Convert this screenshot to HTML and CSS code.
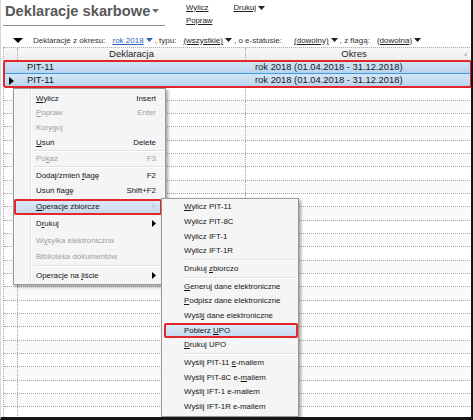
FILE: index.html
```html
<!DOCTYPE html>
<html lang="pl">
<head>
<meta charset="utf-8">
<title>Deklaracje skarbowe</title>
<link rel="stylesheet" href="styles.css">
</head>
<body>
<div class="frame">
  <div class="top">
    <div class="title">Deklaracje skarbowe<svg class="caret" width="7" height="4" viewBox="0 0 7 4"><path d="M0 0H7L3.5 4Z"/></svg></div>
    <div class="actions">
      <div class="acol"><a class="act">Wylicz</a><a class="act">Popraw</a></div>
      <a class="act drk">Drukuj<svg class="tri" width="7" height="4" viewBox="0 0 7 4"><path d="M0 0H7L3.5 4Z"/></svg></a>
    </div>
  </div>

  <div class="filter">
    <svg class="bigtri" width="10" height="5" viewBox="0 0 10 5"><path d="M0 0H10L5 5Z"/></svg>
    <span class="lbl first">Deklaracje z okresu:</span>
    <a class="dd blue">rok 2018<svg class="tri" width="7" height="4" viewBox="0 0 7 4"><path d="M0 0H7L3.5 4Z"/></svg></a>
    <span class="lbl">, typu:</span>
    <a class="dd">(wszystkie)<svg class="tri" width="7" height="4" viewBox="0 0 7 4"><path d="M0 0H7L3.5 4Z"/></svg></a>
    <span class="lbl">, o e-statusie:</span>
    <a class="dd wide">(dowolny)<svg class="tri" width="7" height="4" viewBox="0 0 7 4"><path d="M0 0H7L3.5 4Z"/></svg></a>
    <span class="lbl">, z flagą:</span>
    <a class="dd">(dowolna)<svg class="tri" width="7" height="4" viewBox="0 0 7 4"><path d="M0 0H7L3.5 4Z"/></svg></a>
  </div>

  <div class="grid">
    <div class="row ghead">
      <div class="c ind"></div>
      <div class="c hc">Deklaracja</div>
      <div class="c hc okres">Okres</div>
    </div>
    <div class="sel">
      <div class="row srow r1">
        <div class="c ind"></div>
        <div class="c txt">PIT-11</div>
        <div class="c txt">rok 2018 (01.04.2018 - 31.12.2018)</div>
      </div>
      <div class="row srow r2">
        <div class="c ind"><svg class="rtri" width="5" height="8" viewBox="0 0 5 8"><path d="M0 0L5 4L0 8Z"/></svg></div>
        <div class="c txt">PIT-11</div>
        <div class="c txt">rok 2018 (01.04.2018 - 31.12.2018)</div>
      </div>
    </div>
    <div class="body">
      <div class="row e"><div class="c ind"></div><div class="c"></div><div class="c"></div></div>
      <div class="row e alt"><div class="c ind"></div><div class="c"></div><div class="c"></div></div>
      <div class="row e"><div class="c ind"></div><div class="c"></div><div class="c"></div></div>
      <div class="row e alt"><div class="c ind"></div><div class="c"></div><div class="c"></div></div>
      <div class="row e"><div class="c ind"></div><div class="c"></div><div class="c"></div></div>
      <div class="row e alt"><div class="c ind"></div><div class="c"></div><div class="c"></div></div>
      <div class="row e"><div class="c ind"></div><div class="c"></div><div class="c"></div></div>
      <div class="row e alt"><div class="c ind"></div><div class="c"></div><div class="c"></div></div>
      <div class="row e"><div class="c ind"></div><div class="c"></div><div class="c"></div></div>
      <div class="row e alt"><div class="c ind"></div><div class="c"></div><div class="c"></div></div>
      <div class="row e"><div class="c ind"></div><div class="c"></div><div class="c"></div></div>
      <div class="row e alt"><div class="c ind"></div><div class="c"></div><div class="c"></div></div>
      <div class="row e"><div class="c ind"></div><div class="c"></div><div class="c"></div></div>
      <div class="row e alt"><div class="c ind"></div><div class="c"></div><div class="c"></div></div>
      <div class="row e"><div class="c ind"></div><div class="c"></div><div class="c"></div></div>
      <div class="row e alt"><div class="c ind"></div><div class="c"></div><div class="c"></div></div>
      <div class="row e"><div class="c ind"></div><div class="c"></div><div class="c"></div></div>
      <div class="row e alt"><div class="c ind"></div><div class="c"></div><div class="c"></div></div>
      <div class="row e"><div class="c ind"></div><div class="c"></div><div class="c"></div></div>
      <div class="row e alt"><div class="c ind"></div><div class="c"></div><div class="c"></div></div>
      <div class="row e"><div class="c ind"></div><div class="c"></div><div class="c"></div></div>
      <div class="row e alt"><div class="c ind"></div><div class="c"></div><div class="c"></div></div>
      <div class="row e"><div class="c ind"></div><div class="c"></div><div class="c"></div></div>
      <div class="row e alt"><div class="c ind"></div><div class="c"></div><div class="c"></div></div>
      <div class="row e"><div class="c ind"></div><div class="c"></div><div class="c"></div></div>
    </div>
  </div>

  <div class="menu main">
    <div class="it"><span><u>W</u>ylicz</span><span>Insert</span></div>
    <div class="it dis"><span><u>P</u>opraw</span><span>Enter</span></div>
    <div class="it dis"><span>Koryguj</span></div>
    <div class="it"><span><u>U</u>suń</span><span>Delete</span></div>
    <div class="sep"></div>
    <div class="it dis"><span>Po<u>k</u>aż</span><span>F3</span></div>
    <div class="sep"></div>
    <div class="it"><span>Dodaj/zmień <u>f</u>lagę</span><span>F2</span></div>
    <div class="it"><span>Usuń fla<u>g</u>ę</span><span>Shift+F2</span></div>
    <div class="it tall hl"><span><u>O</u>peracje zbiorcze</span><svg class="arr light" width="4" height="7" viewBox="0 0 4 7"><path d="M0 0L4 3.5L0 7Z"/></svg></div>
    <div class="it tall"><span>D<u>r</u>ukuj</span><svg class="arr" width="4" height="7" viewBox="0 0 4 7"><path d="M0 0L4 3.5L0 7Z"/></svg></div>
    <div class="it tall dis"><span>W<u>y</u>syłka elektroniczna</span></div>
    <div class="it tall dis"><span>Biblioteka dokumentów</span></div>
    <div class="sep"></div>
    <div class="it tall"><span>Operacje na <u>l</u>iście</span><svg class="arr" width="4" height="7" viewBox="0 0 4 7"><path d="M0 0L4 3.5L0 7Z"/></svg></div>
  </div>

  <div class="menu sub">
    <div class="it"><span><u>W</u>ylicz PIT-11</span></div>
    <div class="it"><span>Wylicz PIT-8C</span></div>
    <div class="it"><span>Wylicz IFT-1</span></div>
    <div class="it"><span>Wylicz IFT-1R</span></div>
    <div class="sep"></div>
    <div class="it"><span>Drukuj <u>z</u>biorczo</span></div>
    <div class="sep"></div>
    <div class="it"><span><u>G</u>eneruj dane elektroniczne</span></div>
    <div class="it"><span><u>P</u>odpisz dane elektroniczne</span></div>
    <div class="it"><span>Wyśl<u>i</u>j dane elektroniczne</span></div>
    <div class="it hl"><span>Pobierz <u>U</u>PO</span></div>
    <div class="it"><span><u>D</u>rukuj UPO</span></div>
    <div class="sep"></div>
    <div class="it"><span>Wyślij PIT-11 <u>e</u>-mailem</span></div>
    <div class="it"><span>Wyślij PIT-8C e-<u>m</u>ailem</span></div>
    <div class="it"><span>Wyślij IFT-1 e-mailem</span></div>
    <div class="it"><span>Wyślij IFT-1R e-mailem</span></div>
  </div>
</div>
</body>
</html>
```

FILE: styles.css
```css
* { box-sizing: border-box; }
html, body { margin: 0; padding: 0; background: #fff; }

.frame {
  position: relative;
  width: 473px;
  height: 420px;
  overflow: hidden;
  background: #fff;
  border-left: 1px solid #d6d6d6;
  border-right: 2px solid #161616;
  border-bottom: 3px solid #161616;
  padding-left: 2px;
  font-family: "Liberation Sans", Arial, sans-serif;
  color: #1e1e1e;
}

/* header */
.top { display: flex; align-items: flex-start; height: 27px; }
.title {
  display: flex;
  align-items: flex-start;
  width: 162px;
  height: 26px;
  padding: 3px 0 0 2px;
  border-bottom: 1px solid #8c8c8c;
  font-size: 14.7px;
  font-weight: bold;
  color: #585858;
  white-space: nowrap;
}
.caret { fill: #707070; margin: 6px 0 0 2px; }
.actions { display: flex; align-items: flex-start; margin-left: 21px; padding-top: 1px; }
.acol { display: flex; flex-direction: column; }
.act {
  font-size: 7.8px;
  line-height: 13px;
  color: #222;
  text-decoration: underline;
  white-space: nowrap;
}
.drk { margin-left: 21px; display: flex; align-items: center; height: 13px; }
.tri { fill: currentColor; margin-left: 2px; }

/* filter row */
.filter {
  display: flex;
  align-items: center;
  height: 20.333px;
  padding-top: 6px;
  font-size: 8px;
  color: #333;
  white-space: nowrap;
}
.bigtri { fill: #000; margin-left: 10px; }
.lbl { margin-left: 2px; }
.lbl.first { margin-left: 10px; }
.dd {
  display: flex;
  align-items: center;
  margin-left: 7px;
  color: #1e1e1e;
  text-decoration: underline;
}
.dd.wide { margin-left: 12px; }
.dd.blue { color: #2f63c0; }

/* grid */
.grid { width: 467px; border-left: 1px dotted #a5a5a5; }
.row {
  display: grid;
  grid-template-columns: 14px 228px 224px;
  height: 13.333px;
  border-bottom: 1px dotted #a5a5a5;
}
.c { border-right: 1px dotted #a5a5a5; min-width: 0; }
.c:last-child { border-right: none; }
.ghead {
  border-top: 1px dotted #b0b0b0;
  background: linear-gradient(#f8f8f8, #eeeeee);
}
.hc {
  font-size: 9.5px;
  line-height: 12px;
  text-align: center;
  color: #222;
}
.okres { position: relative; padding-right: 8px; }
.okres::after {
  content: "";
  position: absolute;
  right: 3px;
  top: 4px;
  width: 0;
  height: 0;
  border-left: 4px solid transparent;
  border-bottom: 4px solid #c8c8c8;
}

.sel { position: relative; }
.sel::after {
  content: "";
  position: absolute;
  left: -1px;
  right: -2px;
  top: -1px;
  bottom: -1px;
  border: 2px solid #e3262b;
  border-radius: 3px;
}
.srow {
  background: linear-gradient(#d4e6f7, #b8d3ee);
  border-bottom: none;
}
.srow .c { border-right-color: transparent; }
.r1 { border-bottom: 1px solid #3f9ae6; }
.txt {
  font-size: 9.4px;
  line-height: 12.5px;
  padding-left: 9px;
  color: #1a1a1a;
  white-space: nowrap;
}
.ind { display: flex; align-items: center; padding-left: 5px; }
.rtri { fill: #000; }

.body .row { background: #fff; }
.body .row.alt { background: #fafafa; }

/* menus */
.menu {
  position: absolute;
  background: #f5f5f5;
  border: 1px solid #979797;
  box-shadow: 2px 2px 3px rgba(0, 0, 0, 0.35);
  font-family: "Liberation Sans", Arial, sans-serif;
  font-size: 7.9px;
  color: #151515;
  white-space: nowrap;
}
.menu u { text-decoration: underline; text-underline-offset: 1px; }
.it {
  display: flex;
  justify-content: space-between;
  align-items: center;
  height: 14.667px;
}
.it.dis { color: #a0a0a0; }
.sep {
  height: 2px;
  border-top: 1px solid #e2e2e2;
  border-bottom: 1px solid #ffffff;
}
.hl {
  background: linear-gradient(#dfeaf7, #c3d9f0);
  box-shadow: inset 0 0 0 2px #e3262b;
  border-radius: 2px;
}
.arr { fill: #000; }
.arr.light { fill: #c9d3de; }

.main {
  left: 12px;
  top: 88px;
  width: 153px;
  padding-top: 2px;
  background-image: linear-gradient(to right, transparent 16px, #e2e3e3 16px, #e2e3e3 17px, #ffffff 17px, #ffffff 18px, transparent 18px);
}
.main .it { padding: 0 9px 0 22px; }
.main .it.tall { height: 16.667px; }
.main .sep { margin: 0 1px 0 20px; }
.main .hl { margin: 1px 3px 0 0; padding: 0 6px 0 22px; }

.sub {
  left: 160px;
  top: 198px;
  width: 138px;
  padding: 0.667px 0 2px;
}
.sub .it { padding: 0 6px 0 22px; }
.sub .sep { height: 3px; margin: 0 1px 0 21px; border-top: none; border-bottom: none; background: linear-gradient(transparent 1px, #e2e2e2 1px, #e2e2e2 2px, #fff 2px); }
.sub .hl { margin: 0 0 0 2px; padding-left: 20px; }
```
